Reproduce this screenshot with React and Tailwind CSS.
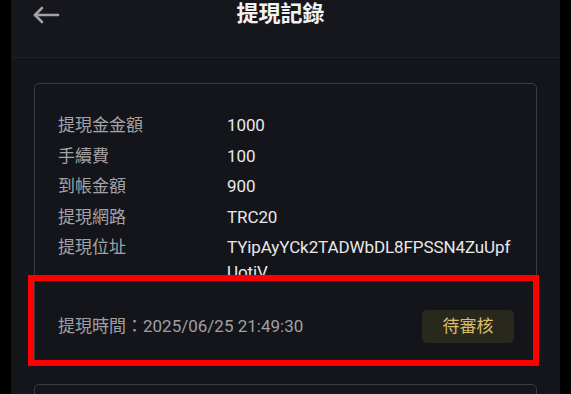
import React from 'react';

const rows = [
    ['提現金金額', ['1000']],
    ['手續費', ['100']],
    ['到帳金額', ['900']],
    ['提現網路', ['TRC20']],
    ['提現位址', ['TYipAyYCk2TADWbDL8FPSSN4ZuUpf', 'UotiV']],
];

export default function App() {
    return (
        <div
            className="w-[571px] h-[394px] bg-black overflow-hidden relative"
            style={{ fontFamily: "Roboto, 'Noto Sans CJK TC', sans-serif" }}
        >
            <div className="ml-[11px] w-[549px] h-full bg-[#14151a]">
                {/* Header */}
                <div className="h-[58px] relative flex items-center justify-center border-b border-[#1d1f25] bg-[#15171c]">
                    <svg className="absolute left-[21px] top-[5px] w-[28px] h-[20px]" viewBox="0 0 28 20" fill="none" stroke="#a3a3a6" strokeWidth={2.6} strokeLinecap="round" strokeLinejoin="round">
                        <path d="M26 10H3" />
                        <path d="M10 3L3 10l7 7" />
                    </svg>
                    <h1 className="text-[22px] font-bold text-[#f2f2f2] -mt-[30px] -ml-[10px]">提現記錄</h1>
                </div>

                {/* Record list */}
                <div className="px-[23px] pt-[25px] flex flex-col gap-[20px]">
                    <div className="border border-[#3a3c42] rounded-[5px] pl-[23px] pr-[22px] pt-[29px] pb-[20px]">
                        <div className="flex flex-col gap-[5.5px]">
                            {rows.map(([label, lines]) => (
                                <div key={label} className="flex text-[17px] leading-[25px]">
                                    <span className="w-[169px] shrink-0 text-[#a3a3a6]">{label}</span>
                                    <span className="flex flex-col whitespace-nowrap text-[#e8e8ea] tracking-[-0.1px]">
                                        {lines.map((line) => (
                                            <span key={line}>{line}</span>
                                        ))}
                                    </span>
                                </div>
                            ))}
                        </div>
                        <div className="mt-[25px] flex items-center justify-between">
                            <span className="text-[17px] text-[#a0a0a3]">提現時間：2025/06/25 21:49:30</span>
                            <span className="w-[92px] h-[33px] rounded-[5px] bg-[#29281d] text-[#d8be6c] text-[17px] flex items-center justify-center">
                                待審核
                            </span>
                        </div>
                    </div>
                    <div className="border border-[#3a3c42] rounded-[5px] h-[120px]"></div>
                </div>
            </div>

            {/* Annotation box */}
            <div className="absolute left-[28px] top-[275px] w-[511px] h-[91px] border-[6px] border-[#ff0000]"></div>
        </div>
    );
}
